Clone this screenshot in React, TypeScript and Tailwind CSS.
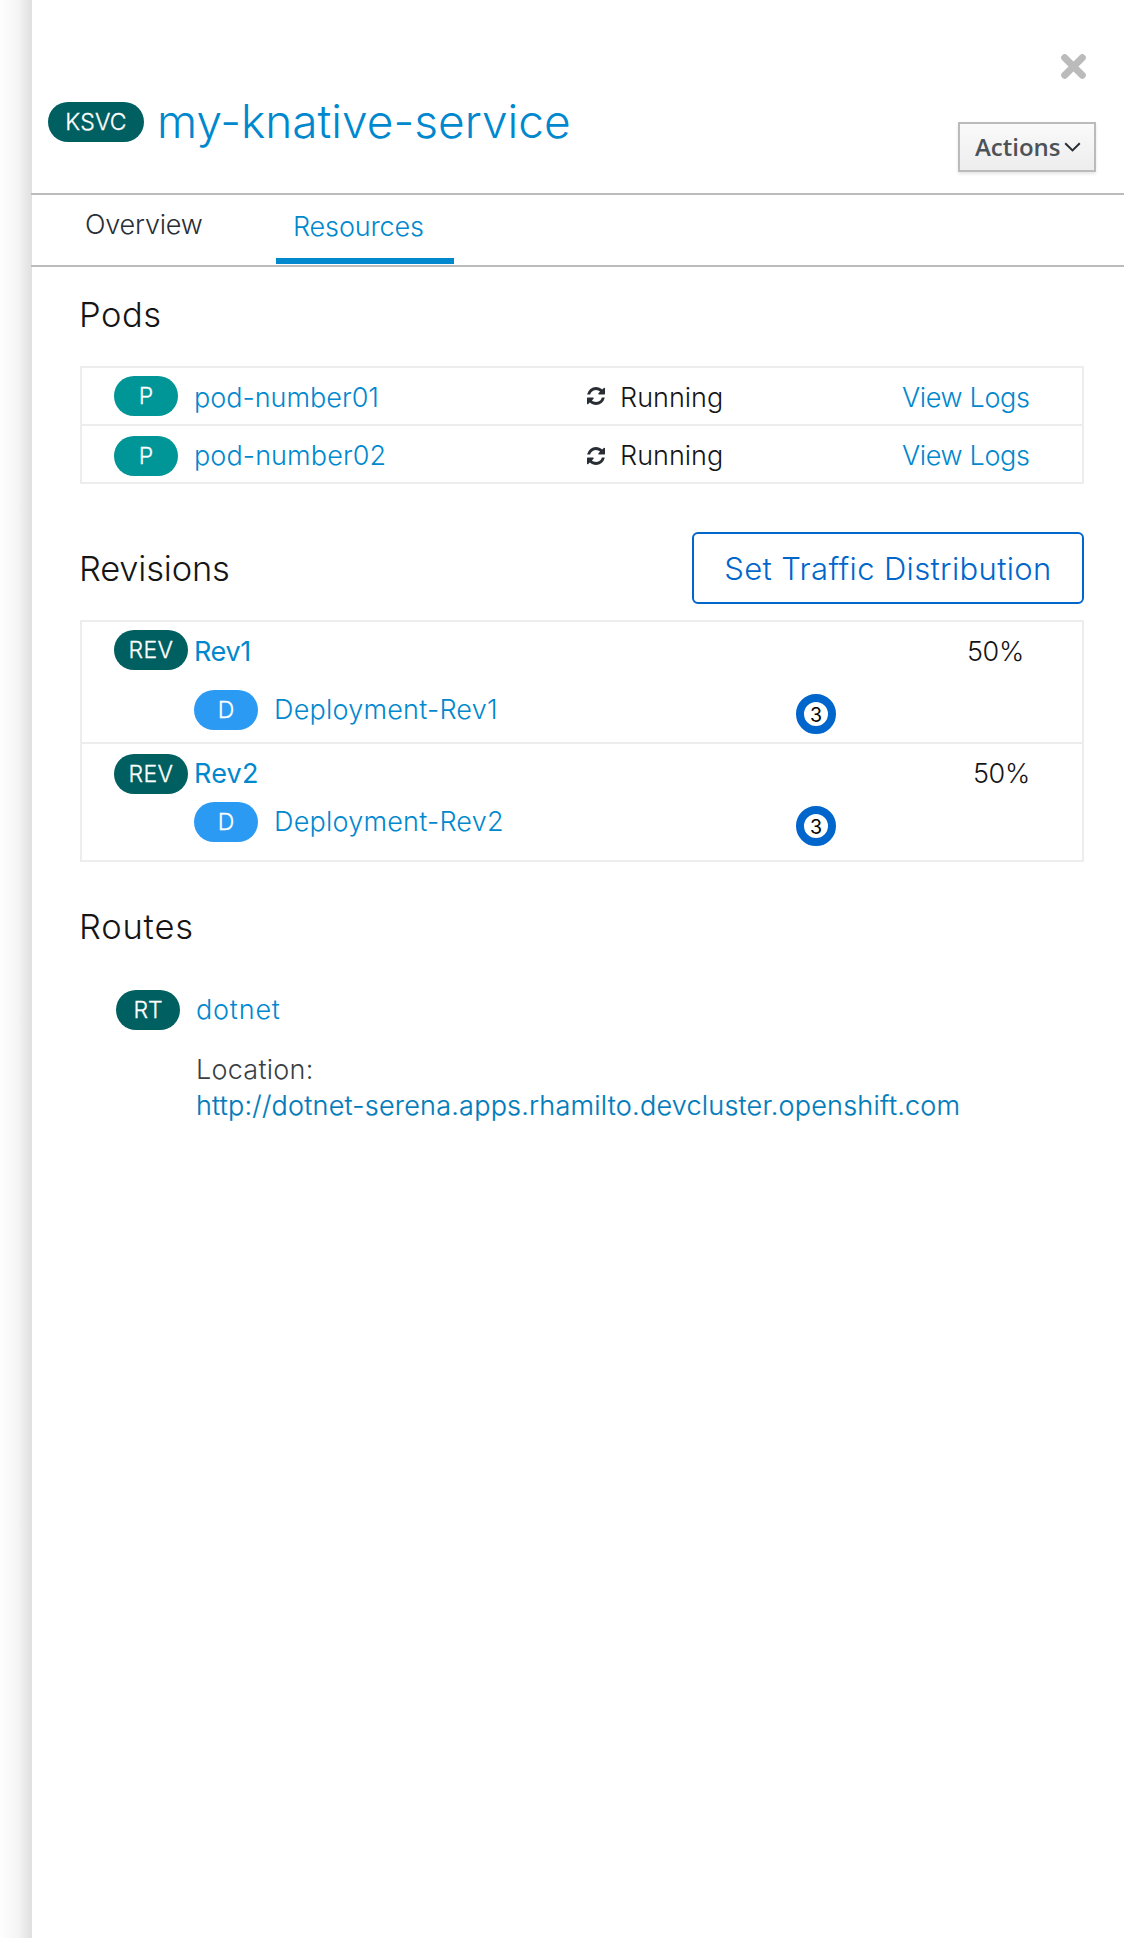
import React from "react";

const LINK = "text-[#0088ce]";

function Pill({ label, className }: { label: string; className: string }) {
  return (
    <span
      className={`inline-flex h-10 shrink-0 items-center justify-center rounded-[20px] text-[23px] leading-10 font-light text-white [-webkit-text-stroke:0.3px] ${className}`}
    >
      {label}
    </span>
  );
}

function SectionTitle({ children, className = "" }: { children: React.ReactNode; className?: string }) {
  return <h2 className={`text-[34.5px] leading-[44px] text-[#151515] ${className}`}>{children}</h2>;
}

function RefreshIcon({ className }: { className: string }) {
  return (
    <svg viewBox="0 0 1536 1536" className={`h-[18px] w-[18px] text-[#292e34] ${className}`} fill="currentColor">
      <path d="M1511 928q0 5-1 7-64 268-268 434.500T764 1536q-146 0-282.500-55T238 1324l-129 129q-19 19-45 19t-45-19-19-45V960q0-26 19-45t45-19h448q26 0 45 19t19 45-19 45l-137 137q71 66 161 102t187 36q134 0 250-65t186-179q11-17 53-117 8-23 30-23h192q13 0 22.500 9.500t9.500 22.500zm25-800v448q0 26-19 45t-45 19h-448q-26 0-45-19t-19-45 19-45l138-138Q969 256 768 256q-134 0-250 65T332 500q-11 17-53 117-8 23-30 23H50q-13 0-22.500-9.500T18 608v-7q65-268 270-434.500T768 0q146 0 284 55.500T1297 212l130-129q19-19 45-19t45 19 19 45z" />
    </svg>
  );
}

function PodRow({ name, pill, icon, nameSpacing }: { name: string; pill: string; icon: string; nameSpacing: string }) {
  return (
    <div className="box-content flex h-14 items-start">
      <Pill label="P" className={`ml-8 w-16 bg-[#009596] ${pill}`} />
      <a className={`mt-2.5 ml-4 w-[393px] leading-10 ${nameSpacing} ${LINK}`}>{name}</a>
      <RefreshIcon className={icon} />
      <span className="mt-2.5 ml-[15px] w-[282px] leading-10 text-[#151515]">Running</span>
      <a className={`mt-2.5 leading-10 tracking-[-0.35px] whitespace-nowrap ${LINK}`}>View Logs</a>
    </div>
  );
}

function PodRing({ count }: { count: number }) {
  return (
    <span className="mt-1 flex h-10 w-10 items-center justify-center rounded-full border-8 border-[#0066cc] text-[19.5px] leading-6 font-normal text-black">
      <span className="translate-y-px">{count}</span>
    </span>
  );
}

function Revision(props: {
  name: string;
  deployment: string;
  top: string;
  nameClass: string;
  percentClass: string;
  deployClass: string;
  height: string;
}) {
  return (
    <div className={`box-content ${props.height}`}>
      <div className={`flex items-start pl-8 ${props.top}`}>
        <Pill label="REV" className="w-[74px] bg-[#005f60] tracking-[0.4px]" />
        <a className={`ml-1.5 leading-10 font-normal ${props.nameClass} ${LINK}`}>{props.name}</a>
        <span className={`ml-auto leading-10 tracking-[-0.3px] text-[#151515] ${props.percentClass}`}>50%</span>
      </div>
      <div className={`flex items-start pl-28 ${props.deployClass}`}>
        <Pill label="D" className="w-16 bg-[#2b9af3]" />
        <a className={`ml-4 w-[522px] leading-10 tracking-[0.22px] ${LINK}`}>{props.deployment}</a>
        <PodRing count={3} />
      </div>
    </div>
  );
}

export default function App() {
  return (
    <div className="flex h-[1938px] w-[1124px] overflow-hidden bg-white font-['Inter',sans-serif] text-[27px] font-light">
      <div className="w-8 shrink-0 bg-linear-to-r from-[#fefefe] via-[#f5f5f5] via-55% to-[#dfdfdf]" />
      <main className="min-w-0 flex-1 bg-white">
        <header className="flex h-[193px] justify-between">
          <div className="flex items-start pt-[102px] pl-4">
            <Pill label="KSVC" className="w-24 bg-[#005f60] tracking-[0.2px]" />
            <h1 className={`-mt-[5px] ml-[13px] text-[46px] leading-[48px] whitespace-nowrap ${LINK}`}>
              my-knative-service
            </h1>
          </div>
          <div className="mr-7 flex w-[138px] flex-col items-end pt-[54px]">
            <svg viewBox="0 0 25 25" className="mr-2.5 h-[25px] w-[25px]">
              <path
                d="M3.700 3.700l17.600 17.600M21.300 3.700L3.700 21.300"
                stroke="#bbbbbb"
                strokeWidth="7"
                strokeLinecap="round"
                fill="none"
              />
            </svg>
            <button className="mt-[43px] flex h-[50px] w-[138px] items-center border-2 border-[#bbbbbb] bg-linear-to-b from-[#fafafa] to-[#ededed] pl-[15px] font-['Open_Sans',sans-serif] text-[24px] font-semibold text-[#4d5258] shadow-[0_2px_3px_rgba(3,3,3,0.1)]">
              Actions
              <svg viewBox="0 0 17 10" className="ml-[3px] h-[10px] w-[17px]">
                <path d="M1.200 1.200l7.300 7.200 7.300-7.200" stroke="#292e34" strokeWidth="2" fill="none" />
              </svg>
            </button>
          </div>
        </header>

        <nav className="-ml-px flex h-[74px] items-start border-y-2 border-[#bbbbbb]">
          <a className="ml-[54px] w-[191px] pt-2.5 leading-10 tracking-[-0.2px] text-[#292e34]">Overview</a>
          <a
            className={`h-[69px] w-[178px] border-b-[6px] border-[#0088ce] pt-3 pl-[17px] leading-10 tracking-[-0.15px] ${LINK}`}
          >
            Resources
          </a>
        </nav>

        <div className="pr-10 pl-12">
          <section className="pt-[26px]">
            <SectionTitle className="-ml-px tracking-[0.5px]">Pods</SectionTitle>
            <div className="mt-[29px] divide-y-2 divide-[#ededed] border-2 border-[#ededed]">
              <PodRow name="pod-number01" pill="mt-2" icon="mt-[19px]" nameSpacing="tracking-[0px]" />
              <PodRow name="pod-number02" pill="mt-2.5" icon="mt-[21px]" nameSpacing="tracking-[0.1px]" />
            </div>
          </section>

          <section className="mt-12">
            <div className="flex h-[72px] items-start justify-between">
              <SectionTitle className="mt-[15px] -ml-px tracking-[-0.2px]">Revisions</SectionTitle>
              <button className="h-[72px] w-[392px] rounded-md border-2 border-[#0066cc] pt-0.5 text-[31px] leading-[66px] tracking-[0.35px] text-[#0066cc]">
                Set Traffic Distribution
              </button>
            </div>
            <div className="mt-4 divide-y-2 divide-[#ededed] border-2 border-[#ededed]">
              <Revision
                name="Rev1"
                deployment="Deployment-Rev1"
                height="h-[120px]"
                top="pt-2"
                nameClass="mt-0.5 tracking-[-0.4px]"
                percentClass="mt-0.5 mr-[58px]"
                deployClass="mt-[18px]"
              />
              <Revision
                name="Rev2"
                deployment="Deployment-Rev2"
                height="h-[116px]"
                top="pt-2.5"
                nameClass="tracking-[0.2px]"
                percentClass="mr-[52px]"
                deployClass="mt-2"
              />
            </div>
          </section>

          <section className="mt-[43px]">
            <SectionTitle className="-ml-px tracking-[0.8px]">Routes</SectionTitle>
            <div className="mt-[41px] flex items-start pl-9">
              <Pill label="RT" className="w-16 bg-[#005f60]" />
              <div className="ml-4">
                <a className={`block leading-10 tracking-[0.8px] ${LINK}`}>dotnet</a>
                <div className="mt-[22px] leading-9 tracking-[0.25px] text-[#393f44]">Location:</div>
                <a className="block leading-9 tracking-[0.22px] whitespace-nowrap text-[#007bba] [-webkit-text-stroke:0.2px]">
                  http://dotnet-serena.apps.rhamilto.devcluster.openshift.com
                </a>
              </div>
            </div>
          </section>
        </div>
      </main>
    </div>
  );
}
